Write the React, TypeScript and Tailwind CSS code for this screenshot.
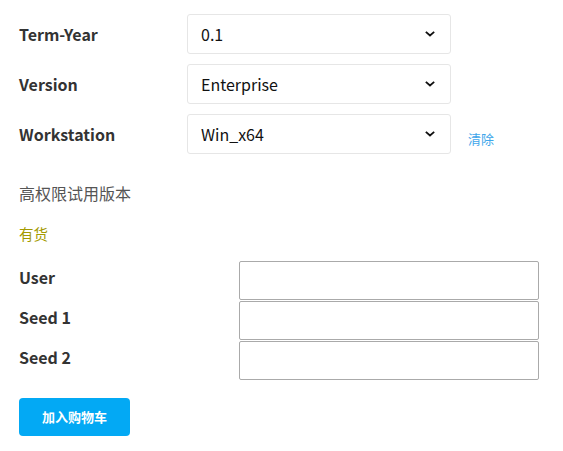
import React from 'react'

const FONT = { fontFamily: '"Noto Sans CJK SC", "Noto Sans", sans-serif' }

const SELECTS = [
  { label: 'Term-Year', value: '0.1' },
  { label: 'Version', value: 'Enterprise' },
  { label: 'Workstation', value: 'Win_x64', clear: true },
]

const INPUTS = ['User', 'Seed 1', 'Seed 2']

function Chevron() {
  return (
    <svg width="12" height="8" viewBox="0 0 12 8" fill="none" stroke="#111" strokeWidth="1.8" strokeLinecap="square">
      <path d="M2.5 2.5l3.5 3 3.5-3" />
    </svg>
  )
}

export default function App() {
  return (
    <div className="min-h-[451px] bg-white pl-[19px] pt-[14px] text-[#333]" style={FONT}>
      {/* option selects */}
      <div className="flex flex-col gap-[10px]">
        {SELECTS.map(s => (
          <div key={s.label} className="flex items-center">
            <div className="w-[168px] text-[16px] font-bold">{s.label}</div>
            <div className="flex h-10 w-[264px] items-center justify-between rounded-[3px] border border-[#e6e6e6] pl-[13px] pr-[14px] text-[16px] text-[#111]">
              <span>{s.value}</span>
              <Chevron />
            </div>
            {s.clear && <span className="ml-[17px] mt-[10px] text-[13px] text-[#3ea6ea]">清除</span>}
          </div>
        ))}
      </div>

      <p className="mt-[28px] text-[16px] leading-[22px] text-[#555]">高权限试用版本</p>
      <p className="mt-[20px] text-[14.5px] leading-[20px] text-[#a39a00]">有货</p>

      {/* personalisation fields */}
      <div className="mt-[17px] flex flex-col gap-[1px]">
        {INPUTS.map(name => (
          <div key={name} className="flex items-center">
            <div className="w-[220px] pb-[7px] text-[16px] font-bold">{name}</div>
            <input className="h-[39px] w-[300px] rounded-[2px] border border-[#aaa] bg-white outline-none" />
          </div>
        ))}
      </div>

      <button className="mt-[18px] h-[38px] w-[111px] rounded-[4px] bg-[#03a9f4] text-[13px] font-bold text-white">
        加入购物车
      </button>
    </div>
  )
}
